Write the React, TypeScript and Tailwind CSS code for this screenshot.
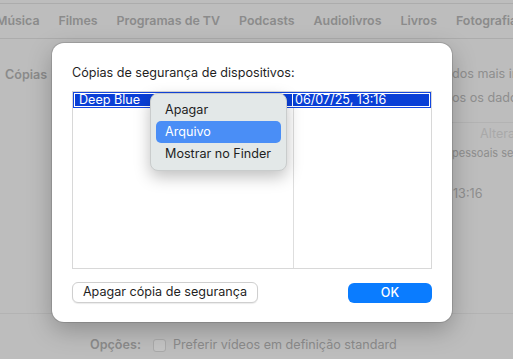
const font = { fontFamily: "Inter, 'Liberation Sans', sans-serif" };

const tabs = ["Música", "Filmes", "Programas de TV", "Podcasts", "Audiolivros", "Livros", "Fotografias"];

function ContextMenu() {
  return (
    <div className="absolute left-[98px] top-[50px] w-[137px] rounded-[8px] border border-[#c9cccc] bg-[#e3e8e8] px-[5px] py-[5px] shadow-[0_6px_16px_rgba(0,0,0,0.25)]">
      <div className="flex h-[22px] items-center whitespace-nowrap px-[9px] text-[12.6px] text-[#1f1f1f]">Apagar</div>
      <div className="flex h-[22px] items-center whitespace-nowrap rounded-[5px] bg-[#4a8ef6] px-[9px] text-[12.6px] text-white">Arquivo</div>
      <div className="flex h-[22px] items-center whitespace-nowrap px-[9px] text-[12.6px] text-[#1f1f1f]">Mostrar no Finder</div>
    </div>
  );
}

function Dialog() {
  return (
    <div className="absolute left-[52px] top-[43px] h-[279px] w-[400px] rounded-[12px] bg-white px-[20px] pt-[22px] shadow-[0_0_0_1px_rgba(0,0,0,0.12),0_8px_24px_rgba(0,0,0,0.25)]">
      <p className="h-[16px] whitespace-nowrap text-[12.6px] leading-[16px] text-[#1f1f1f]">Cópias de segurança de dispositivos:</p>

      {/* table */}
      <div className="relative mt-[10px] flex h-[178px] w-[360px] border border-[#d8d8d8]">
        <div className="w-[221px] border-r border-[#dedede]" />
        <div className="flex-1" />
        <div className="absolute left-0 right-0 top-0 flex h-[16px] border border-[#1346e0] bg-[#0a3fd6] outline outline-1 -outline-offset-2 outline-white">
          <div className="w-[219px] whitespace-nowrap border-r border-white pl-[5px] text-[12.6px] leading-[13px] text-white">Deep Blue</div>
          <div className="whitespace-nowrap pl-[2px] text-[12.6px] leading-[13px] text-white">06/07/25, 13:16</div>
        </div>
      </div>

      {/* buttons */}
      <div className="mt-[13px] flex items-center justify-between">
        <button className="flex h-[21px] w-[186px] items-center justify-center whitespace-nowrap rounded-[6px] border border-[#cfcfcf] bg-white text-[12.6px] text-[#1f1f1f] shadow-[0_1px_1px_rgba(0,0,0,0.08)]">
          Apagar cópia de segurança
        </button>
        <button className="mt-[1px] flex h-[20px] w-[84px] items-center justify-center rounded-[6px] bg-[#0a7cff] text-[12.6px] font-medium text-white">
          OK
        </button>
      </div>

      <ContextMenu />
    </div>
  );
}

export default function App() {
  return (
    <div style={font} className="relative h-[359px] w-[513px] overflow-hidden bg-[#bdbdbd]">
      <div className="h-[4px] border-b border-[#acacac]" />

      {/* tab bar */}
      <div className="flex h-[35px] items-center overflow-hidden border-b border-[#acacac] pt-[1px]">
        <div className="-ml-[4px] flex gap-[19px]">
          {tabs.map((t) => (
            <span key={t} className="whitespace-nowrap text-[12.4px] font-semibold text-[#8b8b8b]">
              {t}
            </span>
          ))}
        </div>
      </div>

      {/* page behind */}
      <div className="relative h-[319px]">
        <div className="flex">
          <div className="w-[52px] whitespace-nowrap pl-[5px] pt-[28px] text-[12.6px] font-semibold leading-[16px] text-[#8b8b8b]">Cópias</div>
          <div className="ml-[400px] flex-1 overflow-hidden whitespace-nowrap text-[#8e8e8e]">
            <div className="pt-[27px] text-[12.6px] leading-[16px]">dos mais importantes</div>
            <div className="pt-[8px] text-[12.6px] leading-[16px]">os os dados</div>
            <div className="mt-[16px] border-t border-[#b3b3b3] pl-[28px] pt-[3px] text-[12.6px] leading-[16px] text-[#a9a9a9]">Alterar</div>
            <div className="pt-[4px] text-[11px] leading-[14px]">pessoais serão</div>
            <div className="pl-[1px] pt-[26px] text-[12.6px] leading-[16px]">13:16</div>
          </div>
        </div>
        <div className="absolute left-0 right-0 top-[274px] border-t border-[#b3b3b3]" />
        <div className="absolute left-[90px] top-[297px] flex items-center">
          <span className="text-[12.6px] font-semibold text-[#8b8b8b]">Opções:</span>
          <span className="ml-[12px] h-[13px] w-[13px] rounded-[3px] border border-[#aaaaaa] bg-[#c4c4c4]" />
          <span className="ml-[7px] text-[12.6px] text-[#8b8b8b]">Preferir vídeos em definição standard</span>
        </div>
      </div>

      <Dialog />
    </div>
  );
}
